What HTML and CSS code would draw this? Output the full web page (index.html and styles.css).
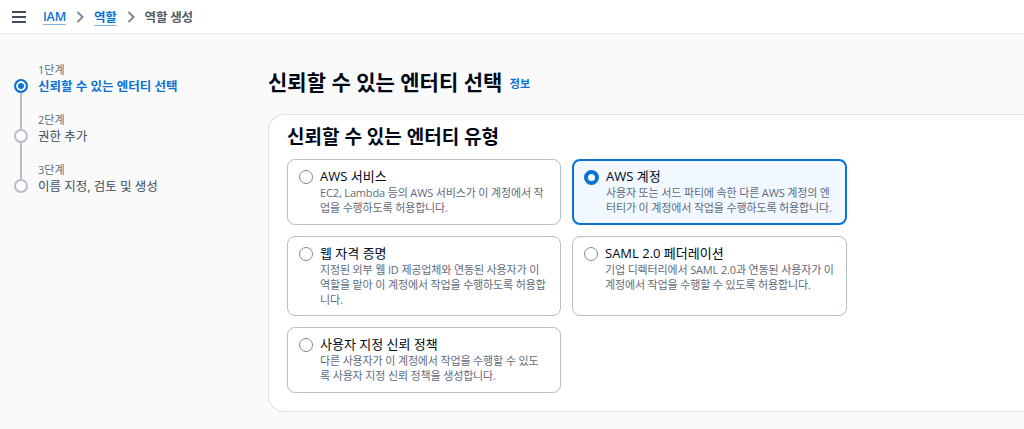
FILE: index.html
```html
<!DOCTYPE html>
<html lang="ko">
<head>
    <meta charset="UTF-8">
    <meta name="viewport" content="width=device-width, initial-scale=1.0">
    <title>IAM - 역할 생성</title>
    <link rel="stylesheet" href="styles.css">
</head>
<body>
    <header class="topbar">
        <span class="menu-icon">
            <svg width="14" height="12" viewBox="0 0 14 12"><path d="M0 1h14M0 6h14M0 11h14" stroke="#414d5c" stroke-width="2"/></svg>
        </span>
        <nav class="crumbs">
            <a href="#">IAM</a>
            <svg class="chev" width="8" height="12" viewBox="0 0 8 12"><path d="M1.5 1l5 5-5 5" fill="none" stroke="#7d8998" stroke-width="2"/></svg>
            <a href="#">역할</a>
            <svg class="chev" width="8" height="12" viewBox="0 0 8 12"><path d="M1.5 1l5 5-5 5" fill="none" stroke="#7d8998" stroke-width="2"/></svg>
            <span class="current">역할 생성</span>
        </nav>
    </header>

    <div class="layout">
        <aside class="steps">
            <div class="step active">
                <span class="dot"></span>
                <div class="step-num">1단계</div>
                <div class="step-name">신뢰할 수 있는 엔터티 선택</div>
            </div>
            <div class="step">
                <span class="dot"></span>
                <div class="step-num">2단계</div>
                <div class="step-name">권한 추가</div>
            </div>
            <div class="step last">
                <span class="dot"></span>
                <div class="step-num">3단계</div>
                <div class="step-name">이름 지정, 검토 및 생성</div>
            </div>
        </aside>

        <main class="content">
            <h1>신뢰할 수 있는 엔터티 선택 <a href="#" class="info">정보</a></h1>
            <section class="panel">
                <h2>신뢰할 수 있는 엔터티 유형</h2>
                <div class="tiles">
                    <label class="tile">
                        <span class="radio"></span>
                        <span class="tile-text">
                            <span class="tile-title">AWS 서비스</span>
                            <span class="tile-desc">EC2, Lambda 등의 AWS 서비스가 이 계정에서 작업을 수행하도록 허용합니다.</span>
                        </span>
                    </label>
                    <label class="tile selected">
                        <span class="radio"></span>
                        <span class="tile-text">
                            <span class="tile-title">AWS 계정</span>
                            <span class="tile-desc">사용자 또는 서드 파티에 속한 다른 AWS 계정의 엔터티가 이 계정에서 작업을 수행하도록 허용합니다.</span>
                        </span>
                    </label>
                    <label class="tile">
                        <span class="radio"></span>
                        <span class="tile-text">
                            <span class="tile-title">웹 자격 증명</span>
                            <span class="tile-desc">지정된 외부 웹 ID 제공업체와 연동된 사용자가 이 역할을 맡아 이 계정에서 작업을 수행하도록 허용합니다.</span>
                        </span>
                    </label>
                    <label class="tile">
                        <span class="radio"></span>
                        <span class="tile-text">
                            <span class="tile-title">SAML 2.0 페더레이션</span>
                            <span class="tile-desc">기업 디렉터리에서 SAML 2.0과 연동된 사용자가 이 계정에서 작업을 수행할 수 있도록 허용합니다.</span>
                        </span>
                    </label>
                    <label class="tile">
                        <span class="radio"></span>
                        <span class="tile-text">
                            <span class="tile-title">사용자 지정 신뢰 정책</span>
                            <span class="tile-desc">다른 사용자가 이 계정에서 작업을 수행할 수 있도록 사용자 지정 신뢰 정책을 생성합니다.</span>
                        </span>
                    </label>
                </div>
            </section>
        </main>
    </div>
</body>
</html>
```

FILE: styles.css
```css
body {
    margin: 0;
    font-family: "Open Sans", "Noto Sans CJK KR", sans-serif;
    color: #000716;
    background-color: #fafafa;
    overflow: hidden;
}
.topbar {
    height: 34px;
    background-color: #fff;
    border-bottom: 1px solid #e3e3e3;
    display: flex;
    align-items: center;
    padding-left: 12px;
    box-sizing: border-box;
}
.menu-icon {
    display: flex;
    margin-right: 17px;
}
.crumbs {
    display: flex;
    align-items: center;
    gap: 10px;
    font-size: 12.5px;
    font-weight: 600;
    letter-spacing: -0.2px;
}
.crumbs a {
    color: #0972d3;
    text-decoration: underline;
    text-decoration-color: #7fb3e6;
    text-underline-offset: 3px;
}
.crumbs .current {
    color: #545b64;
}
.layout {
    display: flex;
    padding-top: 28px;
}
.steps {
    width: 268px;
    padding-left: 14px;
    box-sizing: border-box;
    flex-shrink: 0;
}
.step {
    position: relative;
    padding-left: 24px;
    height: 50px;
}
.step.last {
    height: auto;
}
.step .dot {
    position: absolute;
    left: 0;
    top: 17px;
    width: 10px;
    height: 10px;
    border: 2px solid #b6bec9;
    border-radius: 50%;
    background: #fff;
}
.step::before {
    content: "";
    position: absolute;
    left: 6px;
    top: 31px;
    height: 36px;
    border-left: 2px solid #b6bec9;
}
.step.last::before {
    display: none;
}
.step.active .dot {
    border-color: #0972d3;
    background: #0972d3;
    box-shadow: inset 0 0 0 2px #fff;
}
.step-num {
    font-size: 11px;
    color: #5f6b7a;
    line-height: 16px;
}
.step-name {
    font-size: 12.5px;
    color: #414d5c;
    line-height: 18px;
}
.step.active .step-name {
    color: #0972d3;
    font-weight: 700;
}
.content {
    flex: 1;
}
h1 {
    margin: 0 0 16px;
    font-size: 21px;
    line-height: 28px;
    font-weight: 700;
    padding-top: 6px;
}
h1 .info {
    font-size: 11px;
    color: #0972d3;
    text-decoration: none;
    font-weight: 700;
    margin-left: 2px;
    vertical-align: 2px;
}
.panel {
    background: #fff;
    border: 1px solid #e0e0e0;
    border-right: none;
    border-radius: 16px 0 0 16px;
    padding: 9px 0 18px 18px;
    height: 298px;
    box-sizing: border-box;
}
h2 {
    margin: 0 0 9px;
    font-size: 19px;
    line-height: 26px;
    font-weight: 700;
}
.tiles {
    display: grid;
    grid-template-columns: 274px 275px;
    gap: 11px 11px;
}
.tile {
    display: flex;
    align-items: flex-start;
    gap: 7px;
    border: 1px solid #b6bec9;
    border-radius: 8px;
    padding: 8px 12px 8px 11px;
    min-height: 66px;
    box-sizing: border-box;
}
.tile.selected {
    border: 2px solid #0972d3;
    background: #f1f8ff;
    padding: 7px 11px 7px 10px;
}
.radio {
    width: 12px;
    height: 12px;
    border: 1.5px solid #7d8998;
    border-radius: 50%;
    flex-shrink: 0;
    margin-top: 2px;
    background: #fff;
}
.tile.selected .radio {
    border: 4px solid #0972d3;
    width: 7px;
    height: 7px;
}
.tile-text {
    display: flex;
    flex-direction: column;
}
.tile-title {
    font-size: 13px;
    line-height: 17px;
    font-weight: 400;
}
.tile-desc {
    font-size: 11px;
    line-height: 15px;
    color: #5f6b7a;
    letter-spacing: -0.15px;
}
```
